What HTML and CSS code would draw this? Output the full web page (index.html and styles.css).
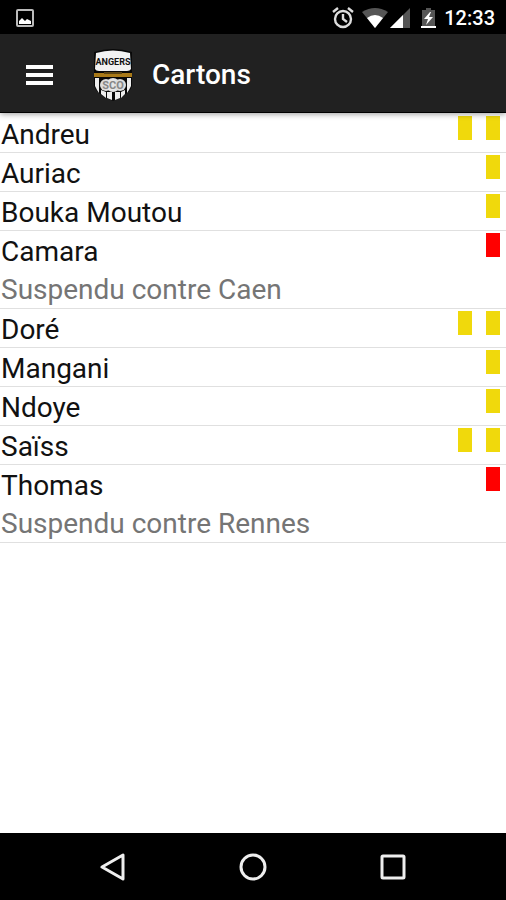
FILE: index.html
```
<!DOCTYPE html>
<html lang="fr">

<head>
    <meta charset="UTF-8" />
    <meta name="viewport" content="width=device-width, initial-scale=1.0" />
    <title>Cartons</title>
    <link rel="stylesheet" href="styles.css">
</head>

<body>

    <div class="status-bar">
        <svg class="notification" width="18" height="18" viewBox="0 0 18 18">
            <rect x="1" y="1" width="16" height="16" rx="1" fill="none" stroke="#bbb" stroke-width="2" />
            <path d="M3 15v-3l3-3 3 3 2-2 2 1 2 1v3z" fill="#fff" />
        </svg>
        <div class="status-icons">
            <svg width="22" height="22" viewBox="0 0 22 22" fill="none" stroke="#ddd" stroke-width="2.4">
                <circle cx="11" cy="12" r="8" />
                <path d="M11 7v5l4 3M1 5l5-4M21 5l-5-4" />
            </svg>
            <svg class="wifi" width="26" height="20" viewBox="0 0 26 20">
                <path d="M0 4Q13-4 26 4L13 20z" fill="#555" />
                <path d="M5 10Q13 4 21 10L13 20z" fill="#fff" />
            </svg>
            <svg class="signal" width="20" height="20" viewBox="0 0 20 20">
                <path d="M20 0v20H0z" fill="#555" />
                <path d="M13 7v13H0z" fill="#fff" />
            </svg>
            <svg class="battery" width="15" height="20" viewBox="0 0 15 20">
                <path d="M1 2h4V0h5v2h4v18H1z" fill="#555" />
                <path d="M9 4L3 11h4l-2 6 7-8H8l2-5zM0 18h15v2H0z" fill="#fff" />
            </svg>
            <span class="clock">12:33</span>
        </div>
    </div>

    <header class="app-bar">
        <button class="menu-button" aria-label="Menu">
            <svg width="27" height="20" viewBox="0 0 27 20" fill="#fff">
                <path d="M0 0h27v4H0zM0 8h27v4H0zM0 16h27v4H0z" />
            </svg>
        </button>
        <svg class="logo" width="40" height="52" viewBox="0 0 40 52">
            <path d="M1 3Q20-3 39 3V37Q37 45 20 52Q3 45 1 37z" fill="#080808" />
            <path d="M3 4Q20-1 37 4L38 20Q37 22 34 22H6Q3 22 2 20z" fill="#f2f2f2" />
            <text class="logo-name" x="20" y="16" text-anchor="middle">ANGERS</text>
            <path d="M1 24h38v4H1z" fill="#a87918" />
            <path d="M11 23h18v2H11z" fill="#594313" />
            <path d="M2 29h4v15l-2-3-2-4zM34 29h4v8l-2 4-2 3zM8 41l5 2v6l-5-4zM14 43h5v8l-5-2zM22 43h5v6l-5 2zM28 43l4-2v4l-4 4z" fill="#eee" />
            <circle cx="13" cy="36" r="6" fill="#ddd" />
            <circle cx="20" cy="36" r="7" fill="#e6e6e6" />
            <circle cx="27" cy="36" r="6" fill="#ddd" />
            <text class="logo-club" x="20" y="40" text-anchor="middle">SCO</text>
        </svg>
        <h1 class="title">Cartons</h1>
    </header>

    <main class="content">
        <ul class="players">
            <li class="player">
                <div class="name">Andreu</div>
                <div class="cards"><span class="card yellow"></span><span class="card yellow"></span></div>
            </li>
            <li class="player">
                <div class="name">Auriac</div>
                <div class="cards"><span class="card yellow"></span></div>
            </li>
            <li class="player">
                <div class="name">Bouka Moutou</div>
                <div class="cards"><span class="card yellow"></span></div>
            </li>
            <li class="player">
                <div class="name">Camara<div class="suspended">Suspendu contre Caen</div></div>
                <div class="cards"><span class="card red"></span></div>
            </li>
            <li class="player">
                <div class="name">Doré</div>
                <div class="cards"><span class="card yellow"></span><span class="card yellow"></span></div>
            </li>
            <li class="player">
                <div class="name">Mangani</div>
                <div class="cards"><span class="card yellow"></span></div>
            </li>
            <li class="player">
                <div class="name">Ndoye</div>
                <div class="cards"><span class="card yellow"></span></div>
            </li>
            <li class="player">
                <div class="name">Saïss</div>
                <div class="cards"><span class="card yellow"></span><span class="card yellow"></span></div>
            </li>
            <li class="player">
                <div class="name">Thomas<div class="suspended">Suspendu contre Rennes</div></div>
                <div class="cards"><span class="card red"></span></div>
            </li>
        </ul>
    </main>

    <nav class="nav-bar">
        <button class="nav-button" aria-label="Retour">
            <svg width="28" height="28" viewBox="0 0 28 28">
                <path d="M3 14L24 2v24z" />
            </svg>
        </button>
        <button class="nav-button" aria-label="Accueil">
            <svg width="28" height="28" viewBox="0 0 28 28">
                <circle cx="14" cy="14" r="12" />
            </svg>
        </button>
        <button class="nav-button" aria-label="Applications récentes">
            <svg width="28" height="28" viewBox="0 0 28 28">
                <rect x="3" y="3" width="22" height="22" rx="1" />
            </svg>
        </button>
    </nav>

</body>

</html>
```

FILE: styles.css
```
body {
    margin: 0;
    font-family: Roboto, sans-serif;
    background: #fff;
    color: #111;
    min-height: 100vh;
    display: flex;
    flex-direction: column;
}

button {
    border: none;
    padding: 0;
    background: none;
    cursor: pointer;
}

svg {
    display: block;
}

.status-bar {
    display: flex;
    justify-content: space-between;
    align-items: center;
    height: 34px;
    padding: 2px 11px 0 16px;
    box-sizing: border-box;
    background: #000;
    color: #fff;
}

.status-icons {
    display: flex;
    align-items: center;
}

.wifi {
    margin-left: 8px;
}

.signal {
    margin-left: 2px;
}

.battery {
    margin: 0 8px 0 11px;
}

.clock {
    font-size: 20px;
    font-weight: 500;
}

.app-bar {
    display: flex;
    align-items: center;
    height: 79px;
    padding: 3px 26px 0;
    box-sizing: border-box;
    background: #212121;
    border-bottom: 1px solid #000;
    color: #fff;
    box-shadow: 0 1px 6px rgba(0, 0, 0, 0.4);
    z-index: 1;
}

.logo {
    margin: 0 19px 0 40px;
}

.logo-name {
    font-size: 9px;
    font-weight: 700;
    fill: #111;
}

.logo-club {
    font-size: 11px;
    font-weight: 700;
    fill: #888;
}

.title {
    margin: 0;
    font-size: 28px;
    font-weight: 500;
}

.content {
    flex-grow: 1;
}

.players {
    margin: 0;
    padding: 1px 0 0;
    list-style: none;
}

.player {
    display: flex;
    justify-content: space-between;
    border-bottom: 1px solid #e0e0e0;
    font-size: 28px;
    line-height: 34px;
}

.name {
    padding: 4px 0 0 1px;
}

.suspended {
    padding-top: 3px;
    color: #757575;
    line-height: 36px;
}

.cards {
    display: flex;
    gap: 14px;
    padding: 2px 6px 0 0;
}

.card {
    width: 14px;
    height: 24px;
}

.yellow {
    background: #f0d90c;
}

.red {
    background: #f00;
}

.nav-bar {
    display: flex;
    justify-content: center;
    gap: 112px;
    height: 67px;
    background: #000;
}

.nav-button svg {
    fill: none;
    stroke: #eee;
    stroke-width: 3;
    stroke-linejoin: round;
}
```
